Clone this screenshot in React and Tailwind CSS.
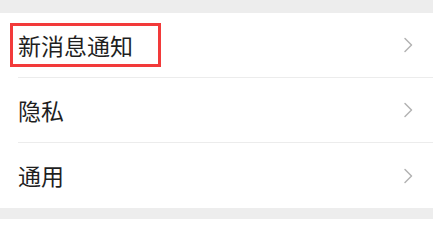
import React from 'react';

function Chevron() {
  return (
    <svg width="10" height="16" viewBox="0 0 10 16" fill="none" className="shrink-0">
      <polyline points="2,1.5 8.5,8 2,14.5" stroke="#b3b3b3" strokeWidth="1.5" strokeLinecap="round" strokeLinejoin="round" />
    </svg>
  );
}

function Row({ label, highlight, last }) {
  return (
    <div className="flex items-center h-[65px] pl-[18px]">
      <div className={`flex flex-1 items-center justify-between h-full pr-[20px] ${last ? '' : 'border-b border-[#ececec]'}`}>
        {highlight ? (
          <span className="-ml-[8px] flex items-center h-[44px] w-[151px] border-[3px] border-[#f23a3a] pl-[5px]">{label}</span>
        ) : (
          <span>{label}</span>
        )}
        <Chevron />
      </div>
    </div>
  );
}

export default function App() {
  const items = ['新消息通知', '隐私', '通用'];
  return (
    <div className="w-[433px] h-[230px] bg-white text-[23px] text-[#1f1f1f]" style={{ fontFamily: '"Noto Sans CJK SC", "Noto Sans", sans-serif' }}>
      <div className="h-[13px] bg-[#ededed]" />
      <div className="bg-white">
        {items.map((t, i) => (
          <Row key={t} label={t} highlight={i === 0} last={i === items.length - 1} />
        ))}
      </div>
      <div className="h-[11px] bg-[#ededed]" />
    </div>
  );
}
